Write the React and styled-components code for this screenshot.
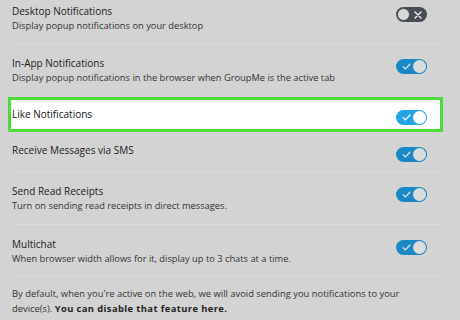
import React from 'react';
import styled, { createGlobalStyle } from 'styled-components';

const GlobalStyle = createGlobalStyle`
  html, body {
    margin: 0;
    padding: 0;
    background: #d3d3d3;
  }
  body {
    font-family: "Open Sans", "Noto Sans", sans-serif;
    -webkit-font-smoothing: antialiased;
  }
`;

const Page = styled.div`
  width: 460px;
  height: 328px;
  overflow: hidden;
  background: #d3d3d3;
  box-sizing: border-box;
  padding: 0 19px 0 12px;
  margin-top: -8px;
`;

const Row = styled.div`
  display: flex;
  align-items: flex-start;
  justify-content: space-between;
  padding: ${({ $top = 11.5, $bottom = 10.5 }) => `${$top}px 14px ${$bottom}px 0`};
  border-bottom: ${({ $divider }) => ($divider ? '1px solid #dcdcdc' : 'none')};
`;

const Highlight = styled(Row)`
  background: #ffffff;
  border: 3px solid #4ddb3b;
  margin: 0 -2px 0 -4px;
  padding: 6.5px 13px 3.5px 1px;
`;

const Text = styled.div`
  display: flex;
  flex-direction: column;
`;

const Title = styled.div`
  font-size: 10px;
  line-height: 15px;
  color: ${({ $lit }) => ($lit ? '#141414' : '#1c1c1c')};
`;

const Sub = styled.div`
  font-size: 9.3px;
  line-height: 14px;
  color: #333333;
`;

const Track = styled.div`
  flex: none;
  width: 31px;
  height: 15px;
  margin-top: 3.5px;
  border-radius: 8px;
  box-sizing: border-box;
  display: flex;
  align-items: center;
  justify-content: space-between;
  padding: ${({ $on }) => ($on ? '0 1px 0 6px' : '0 5px 0 1px')};
  background: ${({ $on, $lit }) => (!$on ? '#474c55' : $lit ? '#25a4e4' : '#1b88c6')};
  flex-direction: ${({ $on }) => ($on ? 'row' : 'row-reverse')};
`;

const Knob = styled.div`
  width: 13px;
  height: 13px;
  border-radius: 50%;
  box-sizing: border-box;
  background: ${({ $on, $lit }) => (!$on ? '#d8d8d8' : $lit ? '#ffffff' : '#dcdcdc')};
  border: ${({ $on }) => ($on ? 'none' : '1.5px solid #474c55')};
`;

const Footer = styled.div`
  padding-top: 9px;
  font-size: 9.4px;
  line-height: 15px;
  color: #333333;
`;

const Strong = styled.span`
  font-weight: 700;
  letter-spacing: 0.4px;
  color: #222222;
`;

const Check = ({ color }) => (
  <svg width="9" height="7" viewBox="0 0 9 7">
    <path d="M1 3.6 L3.4 5.8 L8 1" fill="none" stroke={color} strokeWidth="1.2" strokeLinecap="round" strokeLinejoin="round" />
  </svg>
);

const Cross = () => (
  <svg width="8" height="8" viewBox="0 0 8 8">
    <path d="M1 1 L7 7 M7 1 L1 7" fill="none" stroke="#f2f2f2" strokeWidth="1.4" strokeLinecap="round" />
  </svg>
);

const Toggle = ({ on = true, lit = false }) => (
  <Track $on={on} $lit={lit}>
    {on ? <Check color={lit ? '#ffffff' : '#e6e6e6'} /> : <Cross />}
    <Knob $on={on} $lit={lit} />
  </Track>
);

const settings = [
  { title: 'Desktop Notifications', sub: 'Display popup notifications on your desktop', on: false, divider: true },
  { title: 'In-App Notifications', sub: 'Display popup notifications in the browser when GroupMe is the active tab', bottom: 12.5 },
  { title: 'Like Notifications', highlight: true },
  { title: 'Receive Messages via SMS', divider: true, bottom: 9.5 },
  { title: 'Send Read Receipts', sub: 'Turn on sending read receipts in direct messages.', divider: true, bottom: 11.5 },
  { title: 'Multichat', sub: 'When browser width allows for it, display up to 3 chats at a time.', divider: true },
];

export default function App() {
  return (
    <>
      <GlobalStyle />
      <Page>
        {settings.map((s) => {
          const R = s.highlight ? Highlight : Row;
          return (
            <R key={s.title} $divider={s.divider} $bottom={s.bottom} $top={s.top}>
              <Text>
                <Title $lit={s.highlight}>{s.title}</Title>
                {s.sub && <Sub>{s.sub}</Sub>}
              </Text>
              <Toggle on={s.on !== false} lit={s.highlight} />
            </R>
          );
        })}
        <Footer>
          By default, when you're active on the web, we will avoid sending you notifications to your
          <br />
          device(s). <Strong>You can disable that feature here.</Strong>
        </Footer>
      </Page>
    </>
  );
}
